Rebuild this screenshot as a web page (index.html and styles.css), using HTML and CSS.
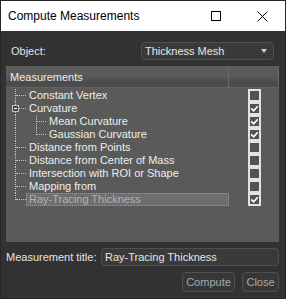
FILE: index.html
```html
<!DOCTYPE html>
<html lang="en">
<head>
  <meta charset="UTF-8" />
  <title>Compute Measurements</title>
  <link rel="stylesheet" href="styles.css">
</head>
<body>
<div class="window">
  <div class="titlebar">
    <span class="title">Compute Measurements</span>
    <span class="tb-btn">
      <svg width="10" height="10" viewBox="0 0 10 10"><rect x="0.5" y="0.5" width="9" height="9" fill="none" stroke="#000" stroke-width="1"/></svg>
    </span>
    <span class="tb-btn">
      <svg width="11" height="11" viewBox="0 0 11 11"><path d="M0.5 0.5 L10.5 10.5 M10.5 0.5 L0.5 10.5" stroke="#000" stroke-width="1" fill="none"/></svg>
    </span>
  </div>
  <div class="content">
    <div class="object-row">
      <span class="label obj-label">Object:</span>
      <div class="combo">
        <span>Thickness Mesh</span>
        <span class="arrow"></span>
      </div>
    </div>

    <div class="tree">
      <div class="tree-head">
        <div class="col-name">Measurements</div>
        <div class="col-check"></div>
      </div>
      <div class="tree-body">
        <div class="row">
          <div class="cell-main"><span class="ind root"></span><span class="name">Constant Vertex</span></div>
          <div class="cell-check"><span class="chk"></span></div>
        </div>
        <div class="row">
          <div class="cell-main"><span class="ind root"><span class="toggle"></span></span><span class="name">Curvature</span></div>
          <div class="cell-check"><span class="chk on"><svg width="9" height="9" viewBox="0 0 9 9"><path d="M1.2 4.4 L3.6 6.8 L7.8 2.2" /></svg></span></div>
        </div>
        <div class="row">
          <div class="cell-main"><span class="ind pass"></span><span class="ind child"></span><span class="name">Mean Curvature</span></div>
          <div class="cell-check"><span class="chk on"><svg width="9" height="9" viewBox="0 0 9 9"><path d="M1.2 4.4 L3.6 6.8 L7.8 2.2" /></svg></span></div>
        </div>
        <div class="row">
          <div class="cell-main"><span class="ind pass"></span><span class="ind child last"></span><span class="name">Gaussian Curvature</span></div>
          <div class="cell-check"><span class="chk on"><svg width="9" height="9" viewBox="0 0 9 9"><path d="M1.2 4.4 L3.6 6.8 L7.8 2.2" /></svg></span></div>
        </div>
        <div class="row">
          <div class="cell-main"><span class="ind root"></span><span class="name">Distance from Points</span></div>
          <div class="cell-check"><span class="chk"></span></div>
        </div>
        <div class="row">
          <div class="cell-main"><span class="ind root"></span><span class="name">Distance from Center of Mass</span></div>
          <div class="cell-check"><span class="chk"></span></div>
        </div>
        <div class="row">
          <div class="cell-main"><span class="ind root"></span><span class="name">Intersection with ROI or Shape</span></div>
          <div class="cell-check"><span class="chk"></span></div>
        </div>
        <div class="row">
          <div class="cell-main"><span class="ind root"></span><span class="name">Mapping from</span></div>
          <div class="cell-check"><span class="chk"></span></div>
        </div>
        <div class="row">
          <div class="cell-main"><span class="ind root last"></span><span class="name selected">Ray-Tracing Thickness</span></div>
          <div class="cell-check"><span class="chk on"><svg width="9" height="9" viewBox="0 0 9 9"><path d="M1.2 4.4 L3.6 6.8 L7.8 2.2" /></svg></span></div>
        </div>
      </div>
    </div>

    <div class="title-row">
      <span class="label">Measurement title:</span>
      <div class="field">Ray-Tracing Thickness</div>
    </div>

    <div class="buttons">
      <button class="btn compute">Compute</button>
      <button class="btn close">Close</button>
    </div>
  </div>
</div>
</body>
</html>
```

FILE: styles.css
```css
* {
  box-sizing: border-box;
}
html, body {
  margin: 0;
  padding: 0;
  background: #323232;
  font-family: "Liberation Sans", Arial, sans-serif;
}
.window {
  width: 286px;
  height: 299px;
  border: 1px solid #262626;
  background: #323232;
  display: flex;
  flex-direction: column;
}
.titlebar {
  height: 30px;
  background: #ffffff;
  display: flex;
  align-items: center;
  flex-shrink: 0;
}
.title {
  flex: 1;
  padding-left: 7px;
  font-size: 12px;
  color: #000;
}
.tb-btn {
  width: 46px;
  height: 30px;
  display: flex;
  align-items: center;
  justify-content: center;
}
.content {
  flex: 1;
  padding: 11px 6px 0 5px;
  display: flex;
  flex-direction: column;
}
.label {
  font-size: 11px;
  color: #e4e4e4;
}
.object-row {
  display: flex;
  align-items: center;
  height: 18px;
}
.obj-label {
  padding-left: 5px;
}
.combo {
  margin-left: auto;
  margin-right: 5px;
  width: 133px;
  height: 18px;
  background: #3a3a3a;
  border: 1px solid #4f4f4f;
  border-radius: 4px;
  display: flex;
  align-items: center;
  padding-left: 3px;
  font-size: 11px;
  color: #e6e6e6;
}
.combo span:first-child {
  flex: 1;
}
.arrow {
  width: 0;
  height: 0;
  margin-right: 6px;
  border-left: 3px solid transparent;
  border-right: 3px solid transparent;
  border-top: 4px solid #cfcfcf;
}

/* tree */
.tree {
  margin-top: 6px;
  height: 176px;
  background: #5a5a5a;
  display: flex;
  flex-direction: column;
}
.tree-head {
  height: 22px;
  display: flex;
  background: linear-gradient(#5d5d5d 0%, #5a5a5a 50%, #4a4a4a 78%, #4e4e4e 100%);
  border-bottom: 1px solid #626262;
  flex-shrink: 0;
}
.col-name {
  width: 223px;
  border-right: 1px solid #6a6a6a;
  padding-left: 4px;
  font-size: 11px;
  color: #ececec;
  display: flex;
  align-items: center;
}
.col-check {
  flex: 1;
  border-right: 1px solid #6a6a6a;
}
.tree-body {
  padding-top: 1px;
}
.row {
  height: 13px;
  display: flex;
}
.cell-main {
  width: 223px;
  display: flex;
  height: 13px;
}
.ind {
  position: relative;
  width: 20px;
  height: 13px;
  flex-shrink: 0;
}
.ind::before {
  content: "";
  position: absolute;
  left: 9px;
  top: 0;
  height: 13px;
  border-left: 1px dotted #c4c4c4;
}
.ind.last::before {
  height: 7px;
}
.ind::after {
  content: "";
  position: absolute;
  left: 10px;
  top: 6px;
  width: 10px;
  border-top: 1px dotted #c4c4c4;
}
.ind.pass::after {
  display: none;
}
.ind.child::before {
  left: 10px;
}
.ind.child::after {
  left: 11px;
  width: 9px;
}
.toggle {
  position: absolute;
  left: 6px;
  top: 3px;
  width: 7px;
  height: 7px;
  border: 1px solid #bdbdbd;
  background: #4c4c4c;
  z-index: 1;
}
.toggle::after {
  content: "";
  position: absolute;
  left: 1px;
  top: 2px;
  width: 3px;
  height: 1px;
  background: #f0f0f0;
}
.name {
  flex: 1;
  padding-left: 3px;
  font-size: 11px;
  line-height: 13px;
  color: #ededed;
  white-space: nowrap;
}
.name.selected {
  background: #6e6e6e;
  border: 1px dotted #9a9a9a;
  padding-left: 2px;
  line-height: 11px;
  color: #b2b2b2;
}
.cell-check {
  flex: 1;
  display: flex;
  justify-content: center;
}
.chk {
  width: 13px;
  height: 13px;
  border: 2px solid #e2e2e2;
  background: #525252;
  display: flex;
}
.chk svg path {
  fill: none;
  stroke: #ffffff;
  stroke-width: 1.7;
}

/* bottom */
.title-row {
  margin-top: 6px;
  height: 18px;
  display: flex;
  align-items: center;
}
.field {
  margin-left: auto;
  width: 178px;
  height: 18px;
  background: #3a3a3a;
  border: 1px solid #4f4f4f;
  border-radius: 4px;
  padding-left: 3px;
  font-size: 11px;
  line-height: 16px;
  color: #e6e6e6;
}
.buttons {
  margin-top: 6px;
  display: flex;
  justify-content: flex-end;
  gap: 7px;
}
.btn {
  height: 20px;
  padding: 0;
  background: #373737;
  border: 1px solid #505050;
  border-radius: 4px;
  font-family: "Liberation Sans", Arial, sans-serif;
  font-size: 11px;
  color: #a9a9a9;
}
.compute {
  width: 53px;
}
.close {
  width: 37px;
}
```
